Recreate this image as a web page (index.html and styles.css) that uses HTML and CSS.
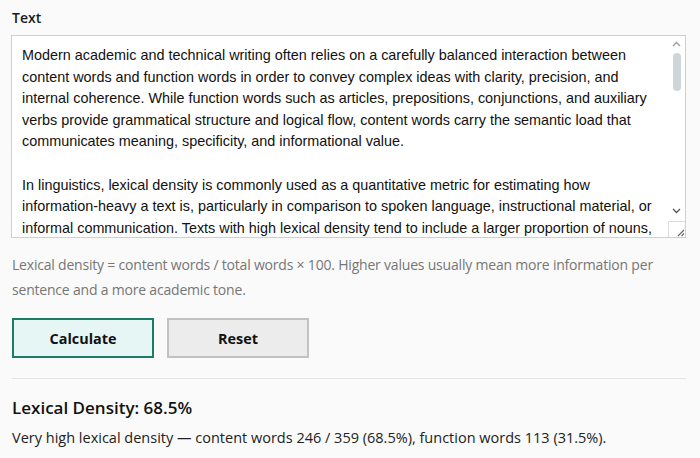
FILE: index.html
```html
<!DOCTYPE html>
<html lang="en">
<head>
<meta charset="utf-8">
<title>Lexical Density</title>
<link rel="stylesheet" href="styles.css">
</head>
<body>
<main class="page">
  <label class="label">Text</label>
  <div class="textbox">
    <div class="text">
      <p>Modern academic and technical writing often relies on a carefully balanced interaction between content words and function words in order to convey complex ideas with clarity, precision, and internal coherence. While function words such as articles, prepositions, conjunctions, and auxiliary verbs provide grammatical structure and logical flow, content words carry the semantic load that communicates meaning, specificity, and informational value.</p>
      <p>In linguistics, lexical density is commonly used as a quantitative metric for estimating how information-heavy a text is, particularly in comparison to spoken language, instructional material, or informal communication. Texts with high lexical density tend to include a larger proportion of nouns,</p>
    </div>
    <div class="scrollbar">
      <div class="arrow">
        <svg width="9" height="6" viewBox="0 0 9 6"><path d="M1 5 L4.5 1.5 L8 5" fill="none" stroke="#9a9a9a" stroke-width="1.3"/></svg>
      </div>
      <div class="track"><div class="thumb"></div></div>
      <div class="arrow">
        <svg width="9" height="6" viewBox="0 0 9 6"><path d="M1 1 L4.5 4.5 L8 1" fill="none" stroke="#555" stroke-width="1.3"/></svg>
      </div>
      <div class="corner">
        <svg width="10" height="10" viewBox="0 0 10 10"><path d="M9 3 L3 9 M9 6.5 L6.5 9" fill="none" stroke="#666" stroke-width="1.1"/></svg>
      </div>
    </div>
  </div>
  <p class="hint">Lexical density = content words / total words × 100. Higher values usually mean more information per sentence and a more academic tone.</p>
  <div class="actions">
    <button class="btn btn-primary">Calculate</button>
    <button class="btn btn-secondary">Reset</button>
  </div>
  <section class="result">
    <h2 class="result-title">Lexical Density: 68.5%</h2>
    <p class="result-text">Very high lexical density — content words 246 / 359 (68.5%), function words 113 (31.5%).</p>
  </section>
</main>
</body>
</html>
```
FILE: styles.css
```css
html, body {
  margin: 0;
  padding: 0;
  background: #fafafa;
}
body {
  font-family: "Open Sans", "Noto Sans", sans-serif;
  color: #1a1a1a;
}
.page {
  width: 675px;
  padding: 9px 0 0 11px;
  display: flex;
  flex-direction: column;
}
.label {
  display: block;
  font-size: 14px;
  font-weight: 600;
  line-height: 18px;
  margin: 0 0 8px 1px;
  color: #1a1a1a;
}
.textbox {
  height: 201px;
  border: 1px solid #cfcfcf;
  background: #fff;
  display: flex;
  overflow: hidden;
}
.text {
  flex: 1;
  overflow: hidden;
  padding: 9px 10px 0 10px;
  font-family: "Liberation Sans", Arial, sans-serif;
  font-size: 14.4px;
  line-height: 21.6px;
  color: #111;
}
.text p {
  margin: 0 0 21.6px 0;
}
.scrollbar {
  width: 17px;
  display: flex;
  flex-direction: column;
  align-items: center;
}
.arrow {
  height: 16px;
  width: 17px;
  display: flex;
  align-items: center;
  justify-content: center;
}
.track {
  flex: 1;
  width: 17px;
  display: flex;
  justify-content: center;
  padding-top: 1px;
}
.thumb {
  width: 8px;
  height: 38px;
  border-radius: 4px;
  background: #cfd6da;
}
.corner {
  width: 16px;
  height: 15px;
  border-left: 1px solid #dcdcdc;
  border-top: 1px solid #dcdcdc;
  display: flex;
  align-items: flex-end;
  justify-content: flex-end;
  margin-top: 2px;
  align-self: flex-end;
}
.hint {
  margin: 14px 0 0 1px;
  font-size: 14px;
  letter-spacing: -0.2px;
  line-height: 25px;
  color: #767676;
}
.actions {
  display: flex;
  gap: 13px;
  margin: 16px 0 0 1px;
}
.btn {
  width: 142px;
  height: 40px;
  font-family: "Open Sans", "Noto Sans", sans-serif;
  font-size: 14.4px;
  font-weight: 700;
  color: #111;
  cursor: pointer;
}
.btn-primary {
  background: #e6f6f4;
  border: 2px solid #1c7c68;
}
.btn-secondary {
  background: #ececec;
  border: 2px solid #c2c2c2;
}
.result {
  margin: 20px 0 0 1px;
  border-top: 1px solid #e4e4e4;
  padding-top: 17px;
}
.result-title {
  margin: 0;
  font-size: 17px;
  font-weight: 600;
  line-height: 24px;
  color: #111;
}
.result-text {
  margin: 6px 0 0 0;
  font-size: 14.5px;
  line-height: 24px;
  color: #222;
}
```
